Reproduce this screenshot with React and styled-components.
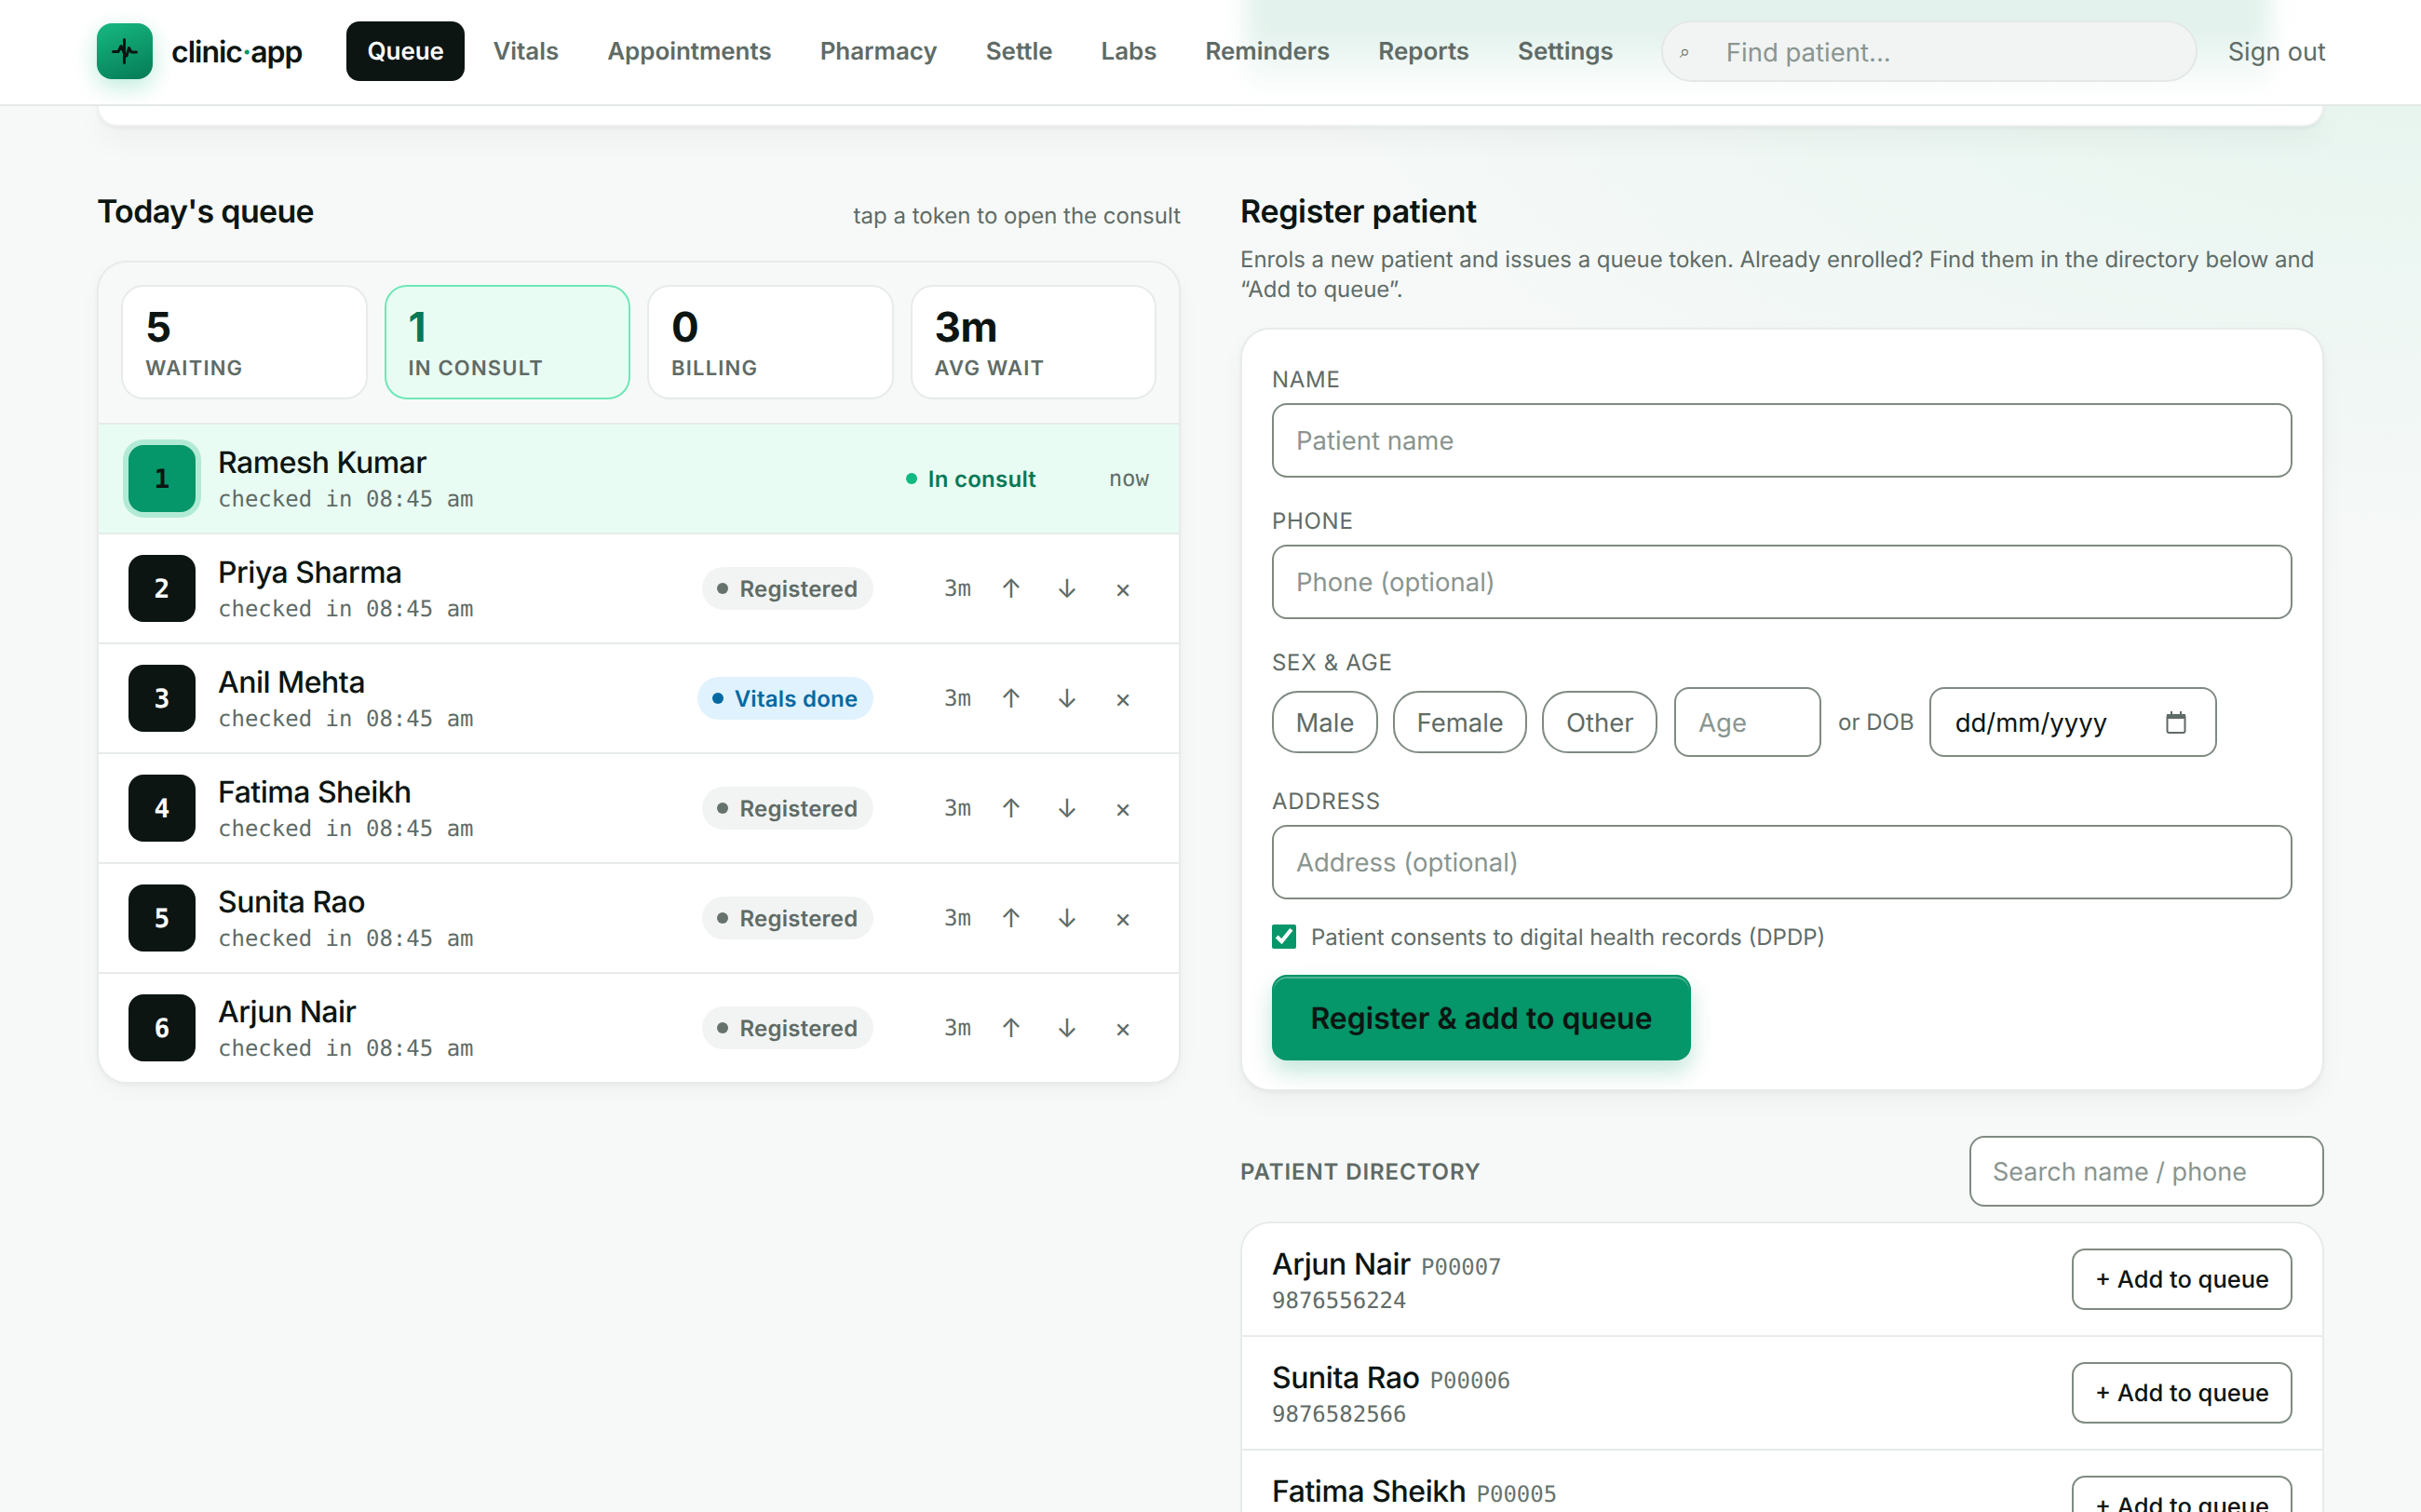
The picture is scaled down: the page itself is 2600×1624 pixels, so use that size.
import React from 'react';
import styled, { createGlobalStyle } from 'styled-components';

const Global = createGlobalStyle`
  html, body { margin: 0; padding: 0; }
  body {
    height: 1624px; overflow: hidden;
    font-family: Inter, "Liberation Sans", sans-serif; color: #0c1512;
    background: radial-gradient(ellipse 1300px 620px at 100% 0, #e4f4ed 0%, rgba(228,244,237,0) 100%), #f7f9f8;
  }
  * { box-sizing: border-box; text-rendering: geometricPrecision; }
  input { font-family: inherit; }
`;
const MONO = '"DejaVu Sans Mono", monospace';

const Nav = styled.header`
  position: relative; height: 114px; display: flex; align-items: center;
  padding: 0 94px 2px 104px; background: #fff; border-bottom: 2px solid #e4e9e7; overflow: hidden;
`;
const Glow = styled.div`
  position: absolute; left: 1338px; top: -60px; width: 1100px; height: 160px;
  background: linear-gradient(#e3f2ec 60%, rgba(227,242,236,0) 100%); filter: blur(12px);
`;
const NavContent = styled.div`
  position: relative; display: flex; align-items: center; width: 100%;
`;
const LogoMark = styled.div`
  width: 60px; height: 60px; border-radius: 16px; flex: none;
  display: flex; align-items: center; justify-content: center;
  background: linear-gradient(160deg, #17b981, #057a56);
  box-shadow: 0 8px 24px rgba(16,185,129,.28);
`;
const Brand = styled.div`
  margin-left: 20px; width: 188px; font-size: 32px; font-weight: 600; letter-spacing: -1px; white-space: nowrap;
  span { color: #059669; }
`;
const Links = styled.nav`display: flex; gap: 8px; align-items: center;`;
const NavLink = styled.a`
  height: 64px; display: flex; align-items: center; border-radius: 14px;
  font-size: 26px; font-weight: 600; letter-spacing: -0.05px; white-space: nowrap;
  color: ${p => (p.$active ? '#fff' : '#5f6b66')};
  background: ${p => (p.$active ? '#0c1512' : 'transparent')};
  padding: 0 ${p => (p.$active ? '22.5px' : '22px')};
`;
const FindBox = styled.div`
  margin-left: 29px; width: 576px; height: 66px; border-radius: 33px; flex: none;
  display: flex; align-items: center; padding-left: 18px;
  background: #f1f4f3; border: 2px solid #e3e8e6;
`;
const FindGlyph = styled.span`font-size: 20px; color: #5f6b66; width: 50px; flex: none;`;
const FindInput = styled.input`
  border: 0; outline: 0; background: transparent; font-size: 27.5px; width: 100%; padding: 2px 0 0;
  &::placeholder { color: #8a9590; }
`;
const SignOut = styled.a`margin-left: 33px; font-size: 27px; color: #5f6b66; white-space: nowrap;`;

const PeekCard = styled.div`
  height: 22px; margin: 0 104px; background: #fff; border-radius: 0 0 28px 28px;
  box-shadow: 0 2px 4px rgba(12,21,18,.05), 0 12px 32px rgba(12,21,18,.05);
  border: 2px solid #eef1f0; border-top: 0;
`;
const Columns = styled.main`
  display: grid; grid-template-columns: 1164px 1164px; gap: 64px; padding: 0 104px; margin-top: 68px;
`;
const Col = styled.section`min-width: 0;`;
const ColHead = styled.div`
  display: flex; justify-content: space-between; align-items: center; height: 44px; margin-top: 1px;
`;
const Title = styled.h2`
  margin: 0; font-size: 34px; font-weight: 600; letter-spacing: ${p => p.$ls}px;
`;
const Hint = styled.span`font-size: 24px; color: #5f6b66; margin-top: 9px;`;
const Panel = styled.div`
  margin-top: 31px; border: 2px solid #e7ebe9; border-radius: 32px; overflow: hidden;
  box-shadow: 0 2px 4px rgba(12,21,18,.04), 0 8px 24px rgba(12,21,18,.03);
`;
const Stats = styled.div`
  display: grid; grid-template-columns: repeat(4, 1fr); gap: 18px; padding: 24px 24px 24px; height: 172px;
`;
const Stat = styled.div`
  height: 123px; border-radius: 24px; padding: 15px 24px 0 24px;
  background: ${p => (p.$on ? '#e9fcf3' : '#fff')};
  border: 2px solid ${p => (p.$on ? '#6ee7b7' : '#e7ebe9')};
`;
const StatNum = styled.div`
  font-size: 44px; line-height: 56px; font-weight: 700; letter-spacing: -0.5px;
  color: ${p => (p.$on ? '#047857' : '#0c1512')};
`;
const StatLabel = styled.div`
  font-size: 22px; line-height: 28px; font-weight: 600; letter-spacing: 1.2px; color: #5f6b66; margin-top: 3px;
`;
const Row = styled.div`
  height: 118px; padding: 0 32px; display: flex; align-items: center;
  border-top: 2px solid #e7ebe9;
  background: ${p => (p.$on ? '#e9fcf3' : '#fff')};
`;
const Token = styled.div`
  width: 72px; height: 72px; border-radius: 16px; flex: none;
  display: flex; align-items: center; justify-content: center;
  font-family: ${MONO}; font-size: 28px; font-weight: 700;
  background: ${p => (p.$on ? '#059669' : '#0c1512')};
  color: ${p => (p.$on ? '#0c1512' : '#fff')};
  box-shadow: ${p => (p.$on ? '0 0 0 6px #b2ebd5' : 'none')};
`;
const RowInfo = styled.div`margin-left: 24px; flex: 1; min-width: 0;`;
const RowName = styled.div`font-size: 32px; line-height: 40px; font-weight: 500; letter-spacing: -0.5px;`;
const RowSub = styled.div`font-family: ${MONO}; font-size: 24px; line-height: 32px; color: #5f6b66; margin-top: 3px;`;
const Pill = styled.span`
  height: 46px; display: inline-flex; align-items: center; gap: 12px; border-radius: 23px;
  padding: 0 16px; font-size: 24px; font-weight: 600; letter-spacing: .25px; white-space: nowrap;
  background: ${p => ({ reg: '#f1f4f3', vit: '#e0f2fe', con: 'transparent' }[p.$kind])};
  color: ${p => ({ reg: '#5f6b66', vit: '#0369a1', con: '#047857' }[p.$kind])};
  &::before {
    content: ''; width: 12px; height: 12px; border-radius: 50%;
    background: ${p => ({ reg: '#66736d', vit: '#0369a1', con: '#10b981' }[p.$kind])};
  }
`;
const Wait = styled.span`
  font-family: ${MONO}; font-size: 24px; color: #5f6b66; text-align: right;
  width: ${p => p.$w}px; flex: none;
`;
const IconBtn = styled.span`
  width: 60px; flex: none; text-align: center; font-size: 28px; color: #5f6b66;
`;
const Actions = styled.div`display: flex; align-items: center; margin: 0 -2px 0 13px;`;

const Desc = styled.p`
  margin: 14px 0 0; font-size: 24px; line-height: 32px; color: #5f6b66; letter-spacing: -0.04px;
`;
const FormCard = styled.form`
  margin-top: 25px; height: 820px; padding: 39px 32px 0; background: #fff; border: 2px solid #e7ebe9; border-radius: 32px;
  box-shadow: 0 2px 4px rgba(12,21,18,.04), 0 12px 28px rgba(12,21,18,.04);
`;
const Label = styled.label`
  display: block; font-size: 24px; line-height: 30px; color: #5f6b66; letter-spacing: .7px; margin: ${p => p.$mt || 0}px 0 10px;
`;
const Field = styled.input`
  display: block; width: 100%; height: 80px; border: 2px solid #7f8b82; border-radius: 16px; padding: 0 24px;
  background: #fff; font-size: 27.5px; outline: 0;
  &::placeholder { color: #8a9590; }
`;
const SexRow = styled.div`display: flex; align-items: center; gap: 16px; height: 77px;`;
const Chip = styled.span`
  height: 67px; display: flex; align-items: center; padding: 0 23.5px; border: 2px solid #7f8b82;
  border-radius: 28px; font-size: 27.5px; color: #5f6b66;
`;
const AgeInput = styled(Field)`width: 158px; height: 75px; flex: none; margin-left: 2px;`;
const OrDob = styled.span`font-size: 24px; color: #5f6b66; white-space: nowrap; margin-left: 2px;`;
const DateBox = styled.div`
  width: 309px; height: 75px; flex: none; border: 2px solid #7f8b82; border-radius: 16px;
  display: flex; align-items: center; justify-content: space-between; padding: 0 30px 0 26px;
  font-size: 27.5px;
`;
const Consent = styled.label`
  display: flex; align-items: center; gap: 16px; margin-top: 26px; height: 28px; font-size: 24px; color: #5f6b66;
`;
const Check = styled.input`
  width: 26px; height: 26px; margin: 0; accent-color: #059669;
`;
const Submit = styled.button`
  display: block; margin-top: 27px; width: 450px; height: 92px; border: 2px solid #059669; border-radius: 16px;
  background: #059669; color: #0c1512; font: 600 32px Inter, sans-serif;
  box-shadow: inset 0 2px 0 rgba(255,255,255,.3), 0 12px 24px rgba(5,150,105,.24);
`;
const DirHead = styled.div`
  margin-top: 48px; display: flex; align-items: center; justify-content: space-between; height: 76px;
`;
const DirTitle = styled.div`font-size: 24px; font-weight: 600; letter-spacing: .9px; color: #5f6b66;`;
const DirSearch = styled(Field)`width: 381px; height: 76px; font-size: 27px; padding: 0 23px;`;
const DirCard = styled.div`
  margin-top: 16px; background: #fff; border: 2px solid #e7ebe9; border-bottom: 0; border-radius: 32px 32px 0 0;
`;
const DirRow = styled.div`
  height: 122px; display: flex; align-items: center; justify-content: space-between; padding: 0 32px;
  &:first-child { height: 120px; }
  & + & { border-top: 2px solid #e7ebe9; }
`;
const DirLine = styled.div`display: flex; align-items: baseline; gap: 11px;`;
const DirName = styled.span`font-size: 32px; line-height: 42px; font-weight: 500; letter-spacing: -0.45px;`;
const DirId = styled.span`font-family: ${MONO}; font-size: 24px; color: #66736d;`;
const DirPhone = styled.div`font-family: ${MONO}; font-size: 24px; line-height: 30px; color: #5f6b66; margin-top: 3px;`;
const AddBtn = styled.button`
  width: 237px; height: 66px; border: 2px solid #7f8b82; border-radius: 14px; background: #fff;
  font: 500 25.5px Inter, sans-serif; color: #0c1512; flex: none;
`;

const queue = [
  ['Priya Sharma', 'reg', 'Registered'],
  ['Anil Mehta', 'vit', 'Vitals done'],
  ['Fatima Sheikh', 'reg', 'Registered'],
  ['Sunita Rao', 'reg', 'Registered'],
  ['Arjun Nair', 'reg', 'Registered'],
];
const stats = [['5', 'WAITING'], ['1', 'IN CONSULT', true], ['0', 'BILLING'], ['3m', 'AVG WAIT']];
const directory = [
  ['Arjun Nair', 'P00007', '9876556224'],
  ['Sunita Rao', 'P00006', '9876582566'],
  ['Fatima Sheikh', 'P00005', '9876512345'],
];

export default function App() {
  return (
    <>
      <Global />
      <Nav>
        <Glow />
        <NavContent>
          <LogoMark>
            <svg width="28" height="28" viewBox="0 0 28 28" fill="none" stroke="#0c1512" strokeWidth="3" strokeLinecap="round" strokeLinejoin="round">
              <path d="M13.5 1.5v25" />
              <path d="M1.5 14.5H7L10 8.5 13.5 16 16 19 18.5 10.5 21 15H26.5" />
            </svg>
          </LogoMark>
          <Brand>clinic<span>·</span>app</Brand>
          <Links>
            {['Queue', 'Vitals', 'Appointments', 'Pharmacy', 'Settle', 'Labs', 'Reminders', 'Reports', 'Settings'].map((l, i) => (
              <NavLink key={l} $active={i === 0}>{l}</NavLink>
            ))}
          </Links>
          <FindBox>
            <FindGlyph>⌕</FindGlyph>
            <FindInput placeholder="Find patient..." />
          </FindBox>
          <SignOut>Sign out</SignOut>
        </NavContent>
      </Nav>
      <PeekCard />
      <Columns>
        <Col>
          <ColHead>
            <Title $ls={-0.68}>Today's queue</Title>
            <Hint>tap a token to open the consult</Hint>
          </ColHead>
          <Panel>
            <Stats>
              {stats.map(([n, l, on]) => (
                <Stat key={l} $on={on}>
                  <StatNum $on={on}>{n}</StatNum>
                  <StatLabel>{l}</StatLabel>
                </Stat>
              ))}
            </Stats>
            <Row $on>
              <Token $on>1</Token>
              <RowInfo>
                <RowName>Ramesh Kumar</RowName>
                <RowSub>checked in 08:45 am</RowSub>
              </RowInfo>
              <Pill $kind="con">In consult</Pill>
              <Wait $w={105}>now</Wait>
            </Row>
            {queue.map(([name, kind, status], i) => (
              <Row key={name}>
                <Token>{i + 2}</Token>
                <RowInfo>
                  <RowName>{name}</RowName>
                  <RowSub>checked in 08:45 am</RowSub>
                </RowInfo>
                <Pill $kind={kind}>{status}</Pill>
                <Wait $w={105.5}>3m</Wait>
                <Actions>
                  <IconBtn>↑</IconBtn>
                  <IconBtn>↓</IconBtn>
                  <IconBtn>×</IconBtn>
                </Actions>
              </Row>
            ))}
          </Panel>
        </Col>
        <Col>
          <ColHead><Title $ls={-0.34}>Register patient</Title></ColHead>
          <Desc>Enrols a new patient and issues a queue token. Already enrolled? Find them in the directory below and “Add to queue”.</Desc>
          <FormCard>
            <Label>NAME</Label>
            <Field placeholder="Patient name" />
            <Label $mt={32}>PHONE</Label>
            <Field placeholder="Phone (optional)" />
            <Label $mt={32}>SEX &amp; AGE</Label>
            <SexRow>
              <Chip>Male</Chip>
              <Chip>Female</Chip>
              <Chip>Other</Chip>
              <AgeInput placeholder="Age" />
              <OrDob>or DOB</OrDob>
              <DateBox>
                dd/mm/yyyy
                <svg width="24" height="26" viewBox="0 0 24 26" fill="none">
                  <rect x="2.5" y="5" width="19" height="19" rx="2" stroke="#5f6b66" strokeWidth="2" />
                  <rect x="2" y="4" width="20" height="5" fill="#5f6b66" />
                  <path d="M7 1v4M17 1v4" stroke="#5f6b66" strokeWidth="2" />
                </svg>
              </DateBox>
            </SexRow>
            <Label $mt={32}>ADDRESS</Label>
            <Field placeholder="Address (optional)" />
            <Consent>
              <Check type="checkbox" defaultChecked />
              Patient consents to digital health records (DPDP)
            </Consent>
            <Submit type="button">Register &amp; add to queue</Submit>
          </FormCard>
          <DirHead>
            <DirTitle>PATIENT DIRECTORY</DirTitle>
            <DirSearch placeholder="Search name / phone" />
          </DirHead>
          <DirCard>
            {directory.map(([n, id, ph]) => (
              <DirRow key={id}>
                <div>
                  <DirLine><DirName>{n}</DirName><DirId>{id}</DirId></DirLine>
                  <DirPhone>{ph}</DirPhone>
                </div>
                <AddBtn type="button">+ Add to queue</AddBtn>
              </DirRow>
            ))}
          </DirCard>
        </Col>
      </Columns>
    </>
  );
}
